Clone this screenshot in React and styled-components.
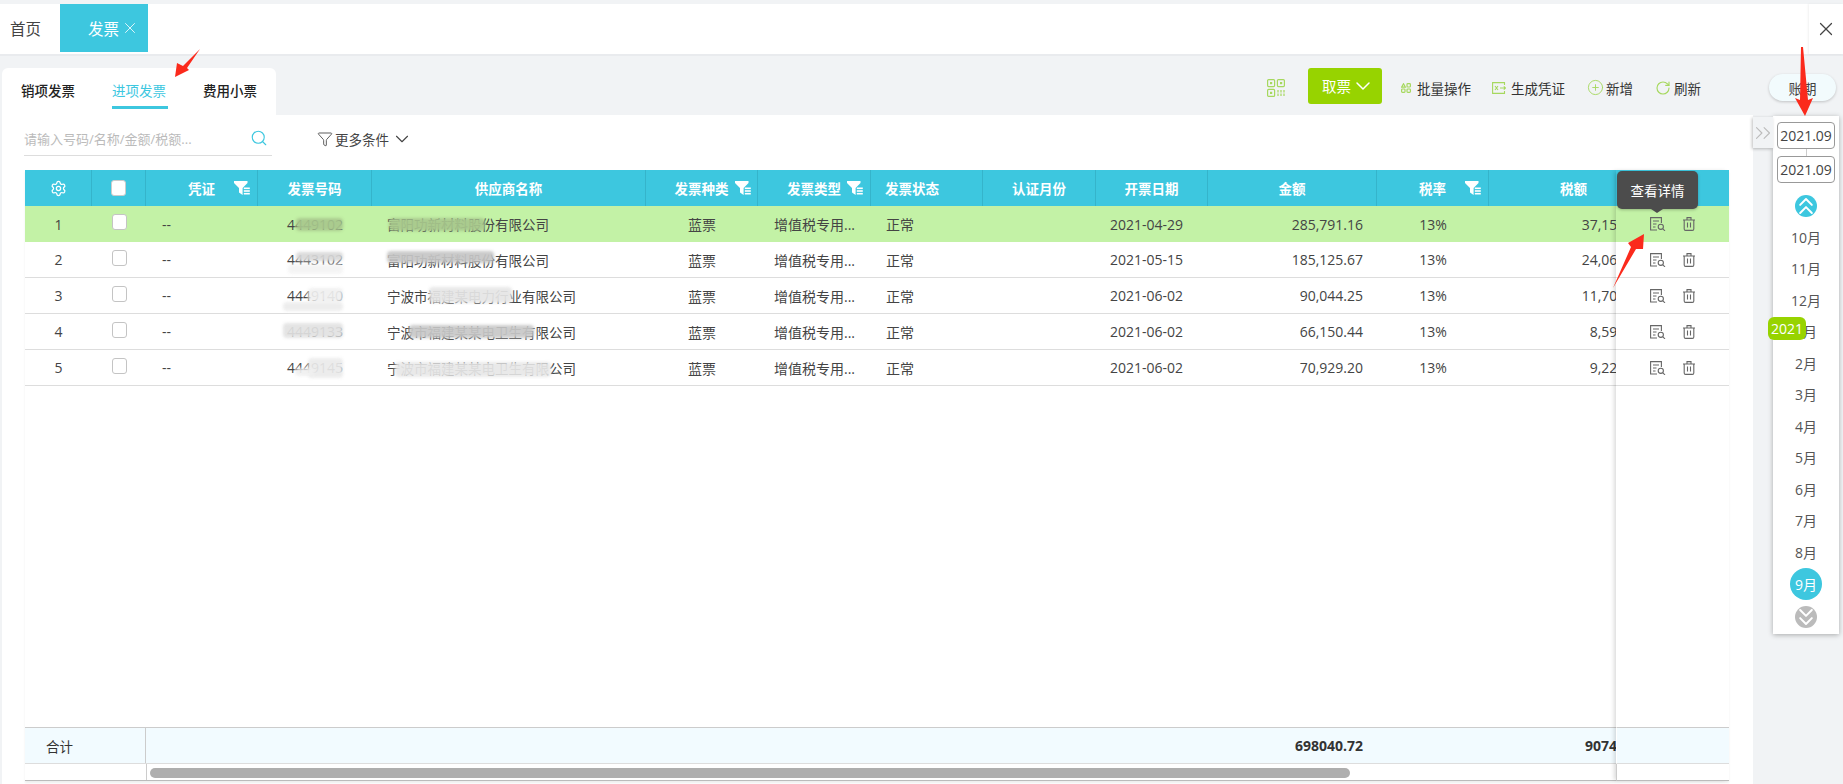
import styled, { createGlobalStyle } from 'styled-components';
import { ChevronDown, ChevronsDown, ChevronsRight, ChevronsUp, CirclePlus, Funnel, RotateCw, Search, Settings, X } from 'lucide-react';

const CYAN = '#3dc7df';
const GREEN = '#97d300';
const COLUMNS = '67px 54px 112px 114px 274px 112px 113px 112px 113px 112px 169px 112px 170px';

const GlobalStyle = createGlobalStyle`
  html, body {
    margin: 0;
    height: 100%;
    overflow: hidden;
    background: #f1f3f5;
    font-family: "Open Sans", "Noto Sans CJK SC", sans-serif;
    font-size: 14px;
    color: #444;
  }

  svg {
    flex: none;
  }
`;

const Page = styled.div`
  position: relative;
  width: 1843px;
  height: 784px;
  display: flex;
  flex-direction: column;
  overflow: hidden;
`;

const TabBar = styled.div`
  margin-top: 4px;
  height: 50px;
  flex: none;
  display: flex;
  background: #fff;
  border-bottom: 2px solid #e9ebee;
`;

const HomeTab = styled.div`
  width: 60px;
  padding-left: 10px;
  box-sizing: border-box;
  line-height: 50px;
  font-size: 15.5px;
  color: #444;
`;

const ActiveTab = styled.div`
  width: 88px;
  height: 48px;
  padding-left: 28px;
  box-sizing: border-box;
  display: flex;
  align-items: center;
  gap: 2px;
  background: ${CYAN};
  color: #fff;
  font-size: 15.5px;
`;

const CloseTab = styled.div`
  margin-left: auto;
  width: 34px;
  display: flex;
  align-items: center;
  justify-content: center;
  box-shadow: -1px 0 2px rgba(0, 0, 0, 0.06);
  color: #444;
`;

const ToolRow = styled.div`
  height: 59px;
  flex: none;
  padding-left: 2px;
  display: flex;
  justify-content: space-between;
`;

const TypeTabs = styled.div`
  margin-top: 12px;
  width: 274px;
  padding-left: 19px;
  box-sizing: border-box;
  display: flex;
  gap: 35px;
  background: #fff;
  border-radius: 6px 6px 0 0;
`;

const TypeTab = styled.div`
  height: 41px;
  padding-top: 15px;
  box-sizing: border-box;
  width: 56px;
  line-height: 16px;
  white-space: nowrap;
  font-size: 13.5px;
  font-weight: ${(p) => (p.$active ? 400 : 500)};
  color: ${(p) => (p.$active ? CYAN : '#222')};
  border-bottom: ${(p) => (p.$active ? `3px solid ${CYAN}` : '0')};
`;

const Tools = styled.div`
  display: flex;
  align-items: center;
  padding-right: 7px;
  padding-top: 4px;
`;

const QrBox = styled.div`
  display: flex;
  margin-right: 23px;
`;

const PickButton = styled.div`
  width: 74px;
  height: 36px;
  margin-top: -4px;
  margin-right: 19px;
  padding-left: 14px;
  box-sizing: border-box;
  display: flex;
  align-items: center;
  background: ${GREEN};
  color: #fff;
  font-size: 14.5px;
  border-radius: 3px;
`;

const ToolItem = styled.div`
  display: flex;
  align-items: center;
  gap: ${(p) => p.$gap}px;
  margin-right: ${(p) => p.$right}px;
  font-size: 13.5px;
  color: #333;
  white-space: nowrap;
`;

const PeriodButton = styled.div`
  width: 67px;
  height: 27px;
  display: flex;
  align-items: center;
  justify-content: center;
  background: #f2fbfd;
  border-radius: 14px;
  box-shadow: 0 1px 3px rgba(0, 0, 0, 0.2);
  color: #444;
`;

const Content = styled.div`
  flex: 1;
  min-height: 0;
  padding-left: 2px;
  display: flex;
  align-items: flex-start;
  gap: 20px;
`;

const Card = styled.div`
  width: 1751px;
  height: 669px;
  padding-left: 23px;
  box-sizing: border-box;
  background: #fff;
`;

const SearchRow = styled.div`
  height: 55px;
  display: flex;
  align-items: flex-start;
`;

const SearchField = styled.div`
  width: 248px;
  height: 41px;
  margin-left: -1px;
  display: flex;
  align-items: center;
  justify-content: space-between;
  padding: 6px 4px 0 0;
  box-sizing: border-box;
  border-bottom: 1px solid #ddd;
  font-size: 13px;
  color: #bbb;
  white-space: nowrap;
`;

const MoreFilter = styled.div`
  margin-left: 45px;
  height: 47px;
  display: flex;
  align-items: center;
  gap: 2px;
  color: #444;
  font-size: 13.5px;
`;

const Table = styled.div`
  width: 1704px;
  height: 611px;
  display: flex;
  box-shadow: 0 2px 2px rgba(0, 0, 0, 0.07);
`;

const Scroller = styled.div`
  width: 1591px;
  height: 100%;
  overflow: hidden;
  display: flex;
  flex-direction: column;
`;

const GridRow = styled.div`
  width: 1634px;
  flex: none;
  display: grid;
  grid-template-columns: ${COLUMNS};
`;

const HeadRow = styled(GridRow)`
  height: 36px;
  background: ${CYAN};
`;

const HeadCell = styled.div`
  position: relative;
  display: flex;
  align-items: center;
  justify-content: ${(p) => (p.$left ? 'flex-start' : 'center')};
  padding-left: ${(p) => (p.$left ? '14px' : '0')};
  border-right: 1px solid #35b4cb;
  color: #fff;
  font-size: 13.5px;
  font-weight: 700;
`;

const HeadFilter = styled.span`
  position: absolute;
  right: ${(p) => p.$right}px;
  top: 11px;
  display: flex;
`;

const HeadCheck = styled.span`
  width: 15px;
  height: 16px;
  background: #fff;
  border-radius: 3px;
  border: 1px solid #ccc;
  box-sizing: border-box;
`;

const Body = styled.div`
  flex: 1;
  min-height: 0;
`;

const DataRow = styled(GridRow)`
  height: 36px;
  box-sizing: border-box;
  background: ${(p) => (p.$selected ? '#c3f2a6' : '#fff')};
  border-bottom: ${(p) => (p.$selected ? '0' : '1px solid #ddd')};
`;

const Cell = styled.div`
  position: relative;
  display: flex;
  align-items: center;
  justify-content: ${(p) => p.$align || 'flex-start'};
  padding: 0 ${(p) => p.$pad || 0}px;
  white-space: nowrap;
  min-width: 0;
  font-size: 14px;
  color: #444;
`;

const NameCell = styled(Cell)`
  padding-left: 15px;
  font-size: 13.5px;
`;

const RowCheck = styled.span`
  width: 15px;
  height: 16px;
  margin-top: -4px;
  margin-left: 20px;
  box-sizing: border-box;
  border: 1px solid #c4c4c4;
  border-radius: 3px;
  background: #fff;
`;

const Smear = styled.span`
  position: absolute;
  left: ${(p) => p.$x}px;
  top: ${(p) => p.$y}px;
  width: ${(p) => p.$w}px;
  height: ${(p) => p.$h}px;
  background: ${(p) => p.$color};
  opacity: 0.92;
  border-radius: 4px;
  filter: blur(1.5px);
`;

const FootRow = styled(GridRow)`
  height: 37px;
  box-sizing: border-box;
  background: #f2fbff;
  border-top: 1px solid #ccc;
  border-bottom: 1px solid #ddd;
`;

const FootLabel = styled(Cell)`
  grid-column: span 2;
  padding-left: 21px;
  font-size: 13.5px;
  color: #333;
  border-right: 1px solid #ccc;
`;

const FootValue = styled(Cell)`
  grid-column: ${(p) => p.$col};
  justify-content: flex-end;
  padding-right: 14px;
  font-weight: 700;
  color: #333;
`;

const ScrollTrack = styled.div`
  height: 17px;
  flex: none;
  display: flex;
  box-sizing: border-box;
  border-bottom: 1px solid #bbb;
`;

const ScrollGutter = styled.div`
  width: 121px;
  border-right: 1px solid #ccc;
`;

const ScrollThumb = styled.div`
  width: 1200px;
  height: 10px;
  margin: 4px 0 0 3px;
  background: #aeaeae;
  border-radius: 5px;
`;

const FixedColumn = styled.div`
  position: relative;
  width: 113px;
  height: 100%;
  display: flex;
  flex-direction: column;
  box-shadow: -3px 0 4px -1px rgba(0, 0, 0, 0.14);
`;

const FixedHead = styled.div`
  height: 36px;
  flex: none;
  background: ${CYAN};
`;

const ActionRow = styled.div`
  height: 36px;
  box-sizing: border-box;
  padding-left: 34px;
  display: flex;
  align-items: center;
  gap: 17px;
  background: ${(p) => (p.$selected ? '#c3f2a6' : '#fff')};
  border-bottom: ${(p) => (p.$selected ? '0' : '1px solid #ddd')};
`;

const FixedFoot = styled.div`
  height: 37px;
  flex: none;
  box-sizing: border-box;
  background: #f2fbff;
  border-top: 1px solid #ccc;
  border-bottom: 1px solid #ddd;
  border-left: 1px solid #fff;
`;

const FixedTrack = styled.div`
  height: 17px;
  flex: none;
  box-sizing: border-box;
  background: #fff;
  border-left: 1px solid #ccc;
  border-bottom: 1px solid #bbb;
`;

const Tooltip = styled.div`
  position: absolute;
  left: 1px;
  top: 1px;
  width: 81px;
  height: 38px;
  display: flex;
  align-items: center;
  justify-content: center;
  background: #4c4c4c;
  color: #fff;
  font-size: 13.5px;
  border-radius: 5px;
  box-shadow: 0 1px 3px rgba(0, 0, 0, 0.25);

  &::after {
    content: '';
    position: absolute;
    left: 34px;
    bottom: -4px;
    border-left: 6px solid transparent;
    border-right: 6px solid transparent;
    border-top: 4px solid #4c4c4c;
  }
`;

const SidePanel = styled.div`
  position: relative;
  margin-top: 1px;
  width: 66px;
  height: 518px;
  padding-top: 6px;
  box-sizing: border-box;
  display: flex;
  flex-direction: column;
  align-items: center;
  background: #fff;
  box-shadow: 0 1px 5px rgba(0, 0, 0, 0.3);
`;

const PanelHandle = styled.div`
  position: absolute;
  left: -20px;
  top: 1px;
  width: 20px;
  height: 31px;
  display: flex;
  align-items: center;
  justify-content: center;
  background: #f1f3f5;
  color: #bbb;
  box-shadow: -1px 1px 3px rgba(0, 0, 0, 0.25);
`;

const DateBox = styled.div`
  width: 58px;
  height: 27px;
  flex: none;
  display: flex;
  align-items: center;
  justify-content: center;
  box-sizing: border-box;
  border: 1px solid #999;
  border-radius: 4px;
  color: #444;
  font-size: 14px;
`;

const DateLink = styled.div`
  width: 1px;
  height: 7px;
  flex: none;
  background: #ccc;
`;

const RoundButton = styled.div`
  width: 22px;
  height: 22px;
  flex: none;
  margin-top: ${(p) => p.$top}px;
  display: flex;
  align-items: center;
  justify-content: center;
  border-radius: 50%;
  background: ${(p) => p.$color};
  color: #fff;
`;

const MonthList = styled.div`
  margin-top: 4px;
  display: flex;
  flex-direction: column;
  align-items: center;
`;

const Month = styled.div`
  height: 31.5px;
  display: flex;
  align-items: center;
  justify-content: center;
  color: #555;
  font-size: 14px;
`;

const CurrentMonth = styled(Month)`
  width: 32px;
  height: 32px;
  background: ${CYAN};
  color: #fff;
  border-radius: 50%;
`;

const YearBadge = styled.div`
  position: absolute;
  left: -5px;
  top: 201px;
  width: 38px;
  height: 23px;
  display: flex;
  align-items: center;
  justify-content: center;
  background: ${GREEN};
  color: #fff;
  font-size: 14px;
  border-radius: 6px;
`;

const Annotations = styled.svg`
  position: absolute;
  left: 0;
  top: 0;
  pointer-events: none;
`;

const QrIcon = () => (
  <svg width="18" height="18" viewBox="0 0 18 18" fill="none" stroke="#a6d85e" strokeWidth="1.2">
    <rect x="0.6" y="0.6" width="7" height="7" rx="1" />
    <rect x="10.4" y="0.6" width="7" height="7" rx="1" />
    <rect x="0.6" y="10.4" width="7" height="7" rx="1" />
    <rect x="3" y="3" width="2.2" height="2.2" fill="#a6d85e" stroke="none" />
    <rect x="13" y="3" width="2.2" height="2.2" fill="#a6d85e" stroke="none" />
    <rect x="3" y="12.8" width="2.2" height="2.2" fill="#a6d85e" stroke="none" />
    <path d="M11 11v6.5M14 11v6.5M17 11v6.5" strokeDasharray="2.5 1" />
  </svg>
);

const BatchIcon = () => (
  <svg width="10" height="10" viewBox="0 0 10 10" fill="none" stroke="#a6d85e" strokeWidth="1.2">
    <path d="M2.5 0.8 4.4 4.2H0.6z" />
    <rect x="6" y="0.6" width="3.4" height="3.4" rx="0.8" />
    <rect x="0.6" y="6" width="3.4" height="3.4" rx="0.8" />
    <rect x="6" y="6" width="3.4" height="3.4" rx="0.8" />
  </svg>
);

const VoucherIcon = () => (
  <svg width="14" height="12" viewBox="0 0 14 12" fill="none" stroke="#a6d85e" strokeWidth="1.1">
    <path d="M12.5 3V0.6H0.6v10.8h11.9V9" />
    <path d="M3 4l3 4M6 4L3 8M8 6h5.4M11.8 4.4 13.4 6l-1.6 1.6" />
  </svg>
);

const TableFilterIcon = () => (
  <svg width="16" height="14" viewBox="0 0 16 14" fill="#fff">
    <path d="M0 0h13.5v2L8.6 7v7L5 11.6V7L0 2z" />
    <rect x="9.8" y="6.5" width="6" height="1.6" />
    <rect x="9.8" y="9.2" width="6" height="1.6" />
    <rect x="9.8" y="11.9" width="6" height="1.6" />
  </svg>
);

const ViewIcon = () => (
  <svg width="16" height="14" viewBox="0 0 16 14" fill="none" stroke="#666" strokeWidth="1.1">
    <path d="M7 13H0.6V0.6h10.8V6" />
    <path d="M3 4h6M3 7h3.5M3 10h2.5" />
    <circle cx="10.8" cy="9.8" r="2.6" />
    <path d="M12.8 11.8 15 13.8" />
  </svg>
);

const TrashIcon = () => (
  <svg width="12" height="14" viewBox="0 0 12 14" fill="none" stroke="#666" strokeWidth="1.1">
    <path d="M0 3h12M4 3V0.6h4V3" />
    <path d="M1.2 3v9a1.4 1.4 0 0 0 1.4 1.4h6.8a1.4 1.4 0 0 0 1.4-1.4V3" />
    <path d="M4.5 5.5v5M7.5 5.5v5" />
  </svg>
);

// smears: [x, y, width, height, colour] inside the number cell and the name cell
const rows = [
  {
    no: '4449102',
    name: '富阳功新材料股份有限公司',
    amount: '285,791.16',
    date: '2021-04-29',
    tax: '37,152.85',
    noSmears: [[38, 12, 47, 13, '#a8c88d']],
    nameSmears: [[17, 12, 96, 13, '#a8c88d']],
  },
  {
    no: '4443102',
    name: '富阳功新材料股份有限公司',
    amount: '185,125.67',
    date: '2021-05-15',
    tax: '24,066.34',
    noSmears: [[38, 10, 47, 9, '#d8d8d8'], [30, 22, 55, 10, '#f4f4f4']],
    nameSmears: [[15, 9, 107, 12, '#c6c6c6']],
  },
  {
    no: '4449140',
    name: '宁波市福建某电力行业有限公司',
    amount: '90,044.25',
    date: '2021-06-02',
    tax: '11,705.75',
    noSmears: [[50, 10, 35, 14, '#f0f0f0'], [25, 24, 60, 9, '#ececec']],
    nameSmears: [[57, 9, 83, 16, '#e6e6e6']],
  },
  {
    no: '4449133',
    name: '宁波市福建某某电卫生有限公司',
    amount: '66,150.44',
    date: '2021-06-02',
    tax: '8,599.56',
    noSmears: [[25, 9, 60, 15, '#e2e2e2']],
    nameSmears: [[37, 11, 125, 13, '#c8c8c8']],
  },
  {
    no: '4449145',
    name: '宁波市福建某某电卫生有限公司',
    amount: '70,929.20',
    date: '2021-06-02',
    tax: '9,220.80',
    noSmears: [[50, 8, 35, 20, '#ebebeb'], [37, 18, 20, 8, '#f0f0f0']],
    nameSmears: [[23, 12, 156, 15, '#e8e8e8']],
  },
];

const months = ['10月', '11月', '12月', '1月', '2月', '3月', '4月', '5月', '6月', '7月', '8月'];

const Smears = ({ list }) =>
  list.map((spec, ndx) => (
    <Smear key={ndx} $x={spec[0]} $y={spec[1]} $w={spec[2]} $h={spec[3]} $color={spec[4]} />
  ));

export default function App() {
  return (
    <Page>
      <GlobalStyle />
      <TabBar>
        <HomeTab>首页</HomeTab>
        <ActiveTab>
          发票
          <X size={18} strokeWidth={1.1} />
        </ActiveTab>
        <CloseTab>
          <X size={22} strokeWidth={1.3} />
        </CloseTab>
      </TabBar>

      <ToolRow>
        <TypeTabs>
          <TypeTab>销项发票</TypeTab>
          <TypeTab $active>进项发票</TypeTab>
          <TypeTab>费用小票</TypeTab>
        </TypeTabs>
        <Tools>
          <QrBox>
            <QrIcon />
          </QrBox>
          <PickButton>
            取票
            <ChevronDown size={24} strokeWidth={1.5} />
          </PickButton>
          <ToolItem $gap={6} $right={21}>
            <BatchIcon />
            批量操作
          </ToolItem>
          <ToolItem $gap={5} $right={22}>
            <VoucherIcon />
            生成凭证
          </ToolItem>
          <ToolItem $gap={2} $right={22}>
            <CirclePlus size={17} strokeWidth={1.3} color="#a6d85e" />
            新增
          </ToolItem>
          <ToolItem $gap={3} $right={68}>
            <RotateCw size={16} strokeWidth={1.7} color="#a6d85e" />
            刷新
          </ToolItem>
          <PeriodButton>账期</PeriodButton>
        </Tools>
      </ToolRow>

      <Content>
        <Card>
          <SearchRow>
            <SearchField>
              请输入号码/名称/金额/税额...
              <Search size={18} strokeWidth={1.5} color={CYAN} />
            </SearchField>
            <MoreFilter>
              <Funnel size={16} strokeWidth={1.3} />
              更多条件
              <ChevronDown size={22} strokeWidth={1.2} />
            </MoreFilter>
          </SearchRow>

          <Table>
            <Scroller>
              <HeadRow>
                <HeadCell>
                  <Settings size={17} strokeWidth={1.8} />
                </HeadCell>
                <HeadCell>
                  <HeadCheck />
                </HeadCell>
                <HeadCell>
                  凭证
                  <HeadFilter $right={7}>
                    <TableFilterIcon />
                  </HeadFilter>
                </HeadCell>
                <HeadCell>发票号码</HeadCell>
                <HeadCell>供应商名称</HeadCell>
                <HeadCell>
                  发票种类
                  <HeadFilter $right={6}>
                    <TableFilterIcon />
                  </HeadFilter>
                </HeadCell>
                <HeadCell>
                  发票类型
                  <HeadFilter $right={7}>
                    <TableFilterIcon />
                  </HeadFilter>
                </HeadCell>
                <HeadCell $left>发票状态</HeadCell>
                <HeadCell>认证月份</HeadCell>
                <HeadCell>开票日期</HeadCell>
                <HeadCell>金额</HeadCell>
                <HeadCell>
                  税率
                  <HeadFilter $right={7}>
                    <TableFilterIcon />
                  </HeadFilter>
                </HeadCell>
                <HeadCell>税额</HeadCell>
              </HeadRow>

              <Body>
                {rows.map((row, ndx) => (
                  <DataRow key={ndx} $selected={ndx === 0}>
                    <Cell $align="center">{ndx + 1}</Cell>
                    <Cell>
                      <RowCheck />
                    </Cell>
                    <Cell $pad={16}>--</Cell>
                    <Cell $align="center">
                      {row.no}
                      <Smears list={row.noSmears} />
                    </Cell>
                    <NameCell>
                      {row.name}
                      <Smears list={row.nameSmears} />
                    </NameCell>
                    <Cell $align="center">蓝票</Cell>
                    <Cell $pad={16}>增值税专用...</Cell>
                    <Cell $pad={15}>正常</Cell>
                    <Cell />
                    <Cell $pad={14}>{row.date}</Cell>
                    <Cell $align="flex-end" $pad={14}>
                      {row.amount}
                    </Cell>
                    <Cell $align="center">13%</Cell>
                    <Cell $align="flex-end" $pad={14}>
                      {row.tax}
                    </Cell>
                  </DataRow>
                ))}
              </Body>

              <FootRow>
                <FootLabel>合计</FootLabel>
                <FootValue $col={11}>698040.72</FootValue>
                <FootValue $col={13}>90745.29</FootValue>
              </FootRow>
              <ScrollTrack>
                <ScrollGutter />
                <ScrollThumb />
              </ScrollTrack>
            </Scroller>

            <FixedColumn>
              <FixedHead />
              <Body>
                {rows.map((row, ndx) => (
                  <ActionRow key={ndx} $selected={ndx === 0}>
                    <ViewIcon />
                    <TrashIcon />
                  </ActionRow>
                ))}
              </Body>
              <FixedFoot />
              <FixedTrack />
              <Tooltip>查看详情</Tooltip>
            </FixedColumn>
          </Table>
        </Card>

        <SidePanel>
          <PanelHandle>
            <ChevronsRight size={26} strokeWidth={1} />
          </PanelHandle>
          <DateBox>2021.09</DateBox>
          <DateLink />
          <DateBox>2021.09</DateBox>
          <RoundButton $top={12} $color={CYAN}>
            <ChevronsUp size={28} strokeWidth={1.7} />
          </RoundButton>
          <MonthList>
            {months.map((month) => (
              <Month key={month}>{month}</Month>
            ))}
            <CurrentMonth>9月</CurrentMonth>
          </MonthList>
          <RoundButton $top={6} $color="#bbbbbb">
            <ChevronsDown size={28} strokeWidth={1.7} />
          </RoundButton>
          <YearBadge>2021</YearBadge>
        </SidePanel>
      </Content>

      <Annotations width="1843" height="784" viewBox="0 0 1843 784" fill="#fb2a1c">
        <polygon points="200,49 187,68 189,70 175,77 177,63 183,66" />
        <polygon points="1801,47 1803,47 1808,100 1813,98 1805,116 1795,98 1800,100" />
        <polygon points="1613,288 1631,247 1628,243 1644,234 1643,249 1636,249" />
      </Annotations>
    </Page>
  );
}
